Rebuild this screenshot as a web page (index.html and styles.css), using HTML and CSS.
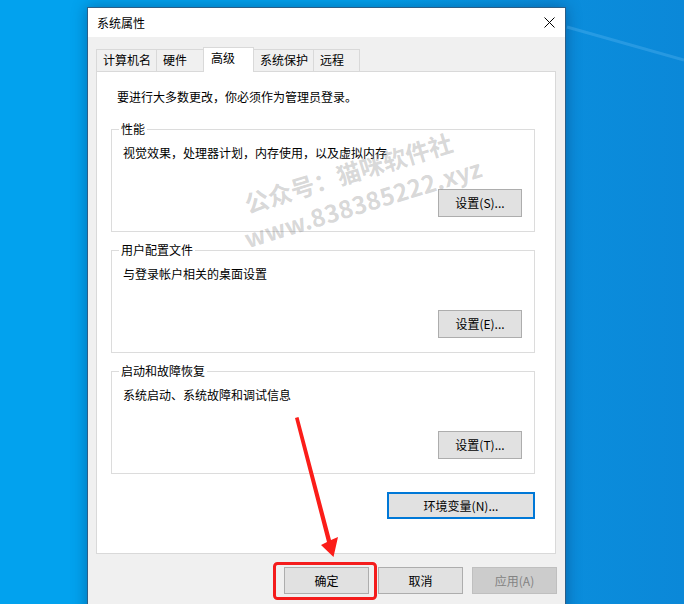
FILE: index.html
```html
<!DOCTYPE html>
<html lang="zh-CN">
<head>
<meta charset="utf-8">
<title>系统属性</title>
<link rel="stylesheet" href="styles.css">
</head>
<body>
<div class="desktop">
  <div class="window">
    <div class="titlebar">
      <span class="title">系统属性</span>
      <svg class="close" width="11" height="11" viewBox="0 0 11 11"><path d="M0.5 0.5 L10.5 10.5 M10.5 0.5 L0.5 10.5" stroke="#000" stroke-width="1" fill="none"/></svg>
    </div>
    <div class="content">
      <div class="tabs">
        <div class="tab">计算机名</div>
        <div class="tab">硬件</div>
        <div class="tab active">高级</div>
        <div class="tab after-active">系统保护</div>
        <div class="tab last">远程</div>
      </div>
      <div class="panel">
        <div class="intro">要进行大多数更改，你必须作为管理员登录。</div>
        <div class="group">
          <div class="group-title">性能</div>
          <div class="group-desc">视觉效果，处理器计划，内存使用，以及虚拟内存</div>
          <div class="group-actions"><button class="btn">设置(S)...</button></div>
        </div>
        <div class="group">
          <div class="group-title">用户配置文件</div>
          <div class="group-desc">与登录帐户相关的桌面设置</div>
          <div class="group-actions"><button class="btn">设置(E)...</button></div>
        </div>
        <div class="group">
          <div class="group-title">启动和故障恢复</div>
          <div class="group-desc">系统启动、系统故障和调试信息</div>
          <div class="group-actions"><button class="btn">设置(T)...</button></div>
        </div>
        <div class="env-row"><button class="btn btn-env">环境变量(N)...</button></div>
      </div>
      <div class="footer">
        <button class="btn btn-foot">确定</button>
        <button class="btn btn-foot">取消</button>
        <button class="btn btn-foot btn-disabled">应用(A)</button>
      </div>
    </div>
  </div>
  <div class="watermark">
    <div class="wm-line">公众号：猫咪软件社</div>
    <div class="wm-line wm-url">www.838385222.xyz</div>
  </div>
  <svg class="annot" width="684" height="604" viewBox="0 0 684 604">
    <path d="M567 27 L684 60" stroke="rgba(140,210,255,0.22)" stroke-width="3" fill="none"/>
    <polygon points="295,418 298.5,417 331,540 338,537 333.5,557 321,545 327,542" fill="#fb1d19"/>
    <rect x="274.5" y="563.5" width="101" height="35" rx="3" ry="3" fill="none" stroke="#f41c1c" stroke-width="3"/>
  </svg>
</div>
</body>
</html>
```

FILE: styles.css
```css
html, body {
  margin: 0;
  padding: 0;
}
body {
  width: 684px;
  height: 604px;
  overflow: hidden;
  font-family: "Noto Sans CJK SC", "Microsoft YaHei", sans-serif;
  font-size: 12px;
  color: #000;
  background: linear-gradient(90deg, #02a2ee 0%, #02a2ee 55%, #0a8edd 80%, #0b88d8 100%);
}
.desktop {
  position: relative;
  width: 684px;
  height: 604px;
  box-sizing: border-box;
  padding: 7px 0 0 87px;
}
.window {
  width: 479px;
  height: 620px;
  box-sizing: border-box;
  border: 1px solid #2b5e87;
  background: #f0f0f0;
  box-shadow: 0 0 14px rgba(0, 20, 60, 0.35);
}
.titlebar {
  height: 29px;
  background: #fff;
  display: flex;
  align-items: center;
  justify-content: space-between;
  padding: 0 10px 0 9px;
}
.title {
  line-height: 16px;
}
.close {
  display: block;
}
.content {
  padding: 10px 9px 0 8px;
}
.tabs {
  display: flex;
  align-items: flex-end;
  height: 25px;
  margin-bottom: -1px;
  position: relative;
  z-index: 1;
}
.tab {
  height: 22px;
  box-sizing: border-box;
  min-width: 47px;
  border-top: 1px solid #d9d9d9;
  border-left: 1px solid #d9d9d9;
  padding: 0 5px 0 6px;
  line-height: 20px;
  margin-bottom: 1px;
  white-space: nowrap;
}
.tab.active {
  height: 25px;
  min-width: 51px;
  margin-bottom: 0;
  background: #fff;
  border-right: 1px solid #d9d9d9;
  padding: 2px 6px 0 7px;
  line-height: 16px;
}
.tab.after-active {
  border-left: none;
}
.tab.last {
  border-right: 1px solid #d9d9d9;
}
.panel {
  height: 483px;
  box-sizing: border-box;
  border: 1px solid #d9d9d9;
  background: #fff;
  padding: 17px 20px 0 14px;
}
.intro {
  margin-left: 6px;
  line-height: 16px;
}
.group {
  margin-top: 18px;
  border: 1px solid #dcdcdc;
  padding: 0 12px 14px 11px;
}
.intro + .group {
  margin-top: 24px;
}
.group-title {
  width: fit-content;
  margin: -9px 0 0 -4px;
  padding: 0 2px;
  background: #fff;
  line-height: 16px;
}
.group-desc {
  margin-top: 8px;
  line-height: 16px;
}
.group-actions {
  display: flex;
  justify-content: flex-end;
  margin-top: 28px;
}
.btn {
  font-family: inherit;
  font-size: 12px;
  color: #000;
  height: 28px;
  width: 84px;
  box-sizing: border-box;
  border: 1px solid #adadad;
  background: #e1e1e1;
  padding: 0;
  margin: 0;
  line-height: 16px;
  display: flex;
  align-items: center;
  justify-content: center;
}
.env-row {
  display: flex;
  justify-content: flex-end;
  margin-top: 18px;
}
.btn-env {
  width: 148px;
  height: 27px;
  border: 2px solid #0078d7;
}
.footer {
  display: flex;
  justify-content: flex-end;
  gap: 9px;
  padding: 13px 0 0 0;
  margin-right: -1px;
}
.btn-foot {
  width: 85px;
  height: 27px;
}
.btn-disabled {
  background: #cccccc;
  border-color: #bfbfbf;
  color: #838383;
}
.watermark {
  position: absolute;
  left: 203px;
  top: 155px;
  width: 300px;
  transform: rotate(-17deg);
  transform-origin: 50% 50%;
  color: rgba(120, 120, 120, 0.3);
  font-weight: 700;
  font-size: 24px;
  text-align: center;
  pointer-events: none;
}
.wm-line {
  line-height: 33px;
  white-space: nowrap;
}
.wm-url {
  padding-left: 10px;
  letter-spacing: 0.3px;
}
.annot {
  position: absolute;
  left: 0;
  top: 0;
  pointer-events: none;
}
```
